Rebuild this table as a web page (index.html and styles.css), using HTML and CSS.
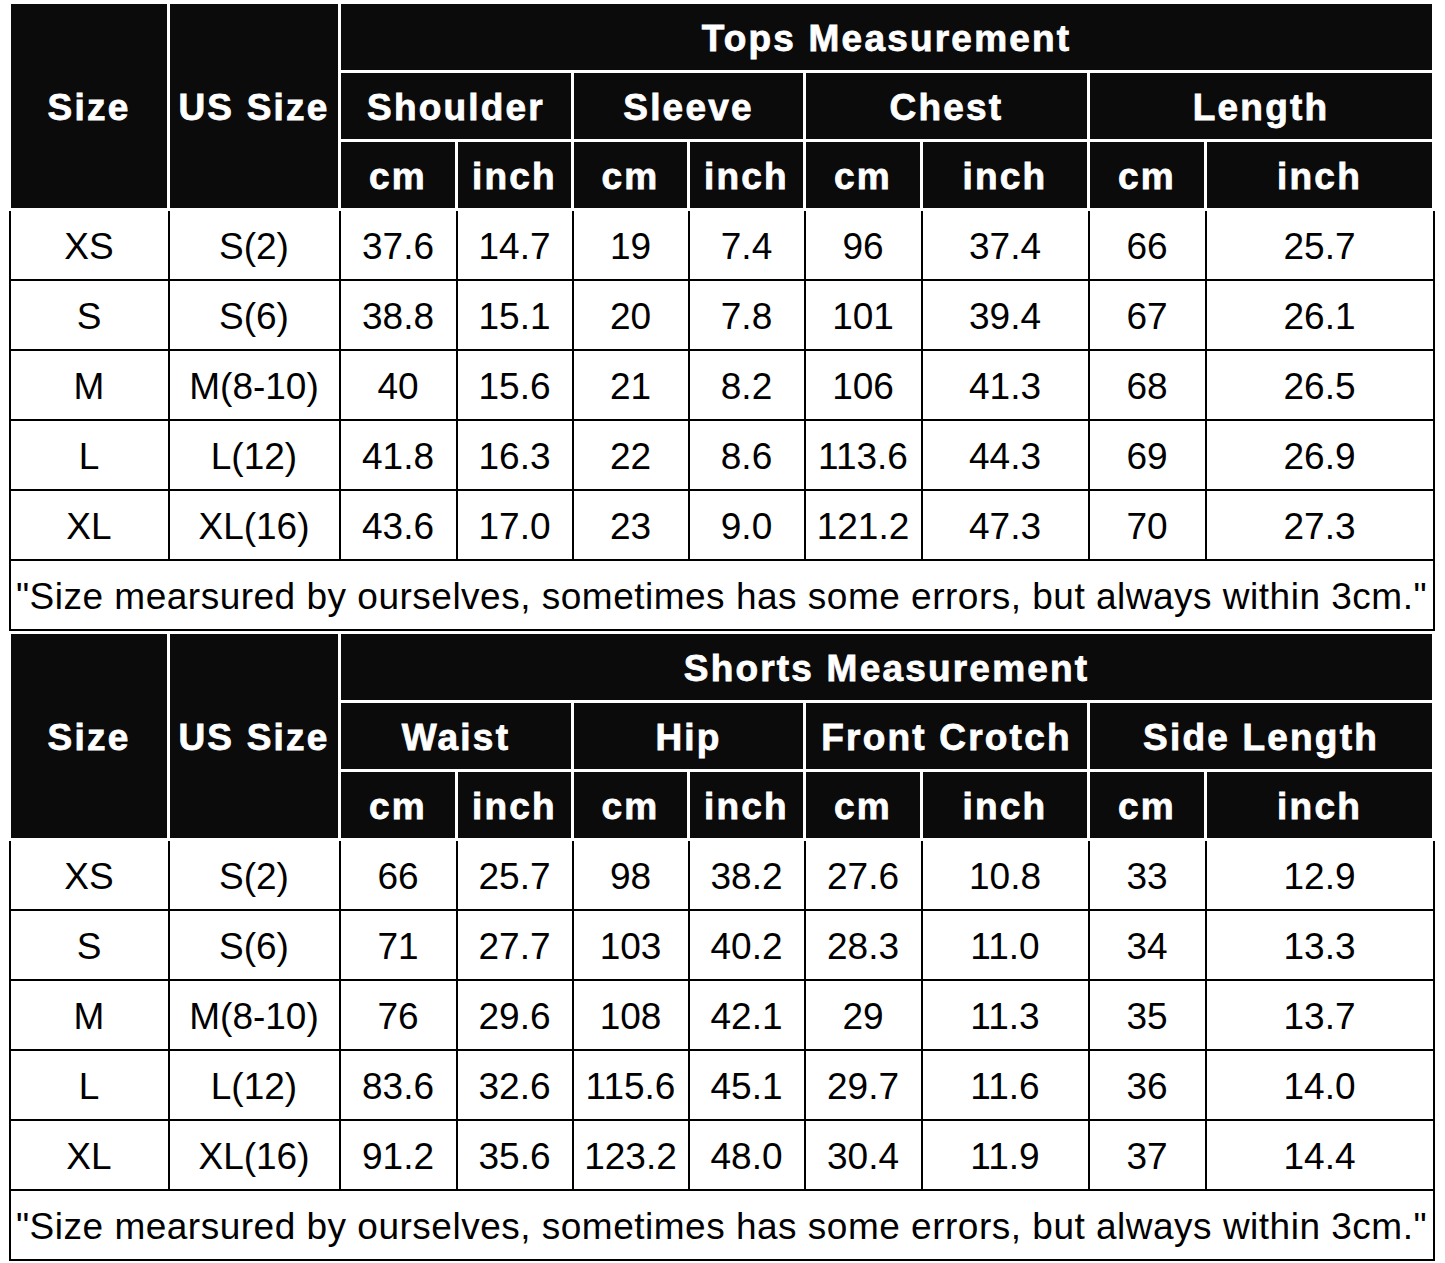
FILE: index.html
```html
<!DOCTYPE html>
<html>
<head>
<meta charset="utf-8">
<link rel="stylesheet" href="styles.css">
</head>
<body>
<div class="page">
<table class="chart">
  <colgroup>
    <col class="c1"><col class="c2"><col class="c3"><col class="c4"><col class="c5"><col class="c6"><col class="c7"><col class="c8"><col class="c9"><col class="c10">
  </colgroup>
  <thead>
    <tr class="hr"><th rowspan="3">Size</th><th rowspan="3">US Size</th><th colspan="8">Tops Measurement</th></tr>
    <tr class="hr"><th colspan="2">Shoulder</th><th colspan="2">Sleeve</th><th colspan="2">Chest</th><th colspan="2">Length</th></tr>
    <tr class="hr"><th>cm</th><th>inch</th><th>cm</th><th>inch</th><th>cm</th><th>inch</th><th>cm</th><th>inch</th></tr>
  </thead>
  <tbody>
    <tr><td>XS</td><td>S(2)</td><td>37.6</td><td>14.7</td><td>19</td><td>7.4</td><td>96</td><td>37.4</td><td>66</td><td>25.7</td></tr>
    <tr><td>S</td><td>S(6)</td><td>38.8</td><td>15.1</td><td>20</td><td>7.8</td><td>101</td><td>39.4</td><td>67</td><td>26.1</td></tr>
    <tr><td>M</td><td>M(8-10)</td><td>40</td><td>15.6</td><td>21</td><td>8.2</td><td>106</td><td>41.3</td><td>68</td><td>26.5</td></tr>
    <tr><td>L</td><td>L(12)</td><td>41.8</td><td>16.3</td><td>22</td><td>8.6</td><td>113.6</td><td>44.3</td><td>69</td><td>26.9</td></tr>
    <tr><td>XL</td><td>XL(16)</td><td>43.6</td><td>17.0</td><td>23</td><td>9.0</td><td>121.2</td><td>47.3</td><td>70</td><td>27.3</td></tr>
    <tr><td class="note" colspan="10">"Size mearsured by ourselves, sometimes has some errors, but always within 3cm."</td></tr>
  </tbody>
</table>
<table class="chart">
  <colgroup>
    <col class="c1"><col class="c2"><col class="c3"><col class="c4"><col class="c5"><col class="c6"><col class="c7"><col class="c8"><col class="c9"><col class="c10">
  </colgroup>
  <thead>
    <tr class="hr"><th rowspan="3">Size</th><th rowspan="3">US Size</th><th colspan="8">Shorts Measurement</th></tr>
    <tr class="hr"><th colspan="2">Waist</th><th colspan="2">Hip</th><th colspan="2">Front Crotch</th><th colspan="2">Side Length</th></tr>
    <tr class="hr"><th>cm</th><th>inch</th><th>cm</th><th>inch</th><th>cm</th><th>inch</th><th>cm</th><th>inch</th></tr>
  </thead>
  <tbody>
    <tr><td>XS</td><td>S(2)</td><td>66</td><td>25.7</td><td>98</td><td>38.2</td><td>27.6</td><td>10.8</td><td>33</td><td>12.9</td></tr>
    <tr><td>S</td><td>S(6)</td><td>71</td><td>27.7</td><td>103</td><td>40.2</td><td>28.3</td><td>11.0</td><td>34</td><td>13.3</td></tr>
    <tr><td>M</td><td>M(8-10)</td><td>76</td><td>29.6</td><td>108</td><td>42.1</td><td>29</td><td>11.3</td><td>35</td><td>13.7</td></tr>
    <tr><td>L</td><td>L(12)</td><td>83.6</td><td>32.6</td><td>115.6</td><td>45.1</td><td>29.7</td><td>11.6</td><td>36</td><td>14.0</td></tr>
    <tr><td>XL</td><td>XL(16)</td><td>91.2</td><td>35.6</td><td>123.2</td><td>48.0</td><td>30.4</td><td>11.9</td><td>37</td><td>14.4</td></tr>
    <tr><td class="note" colspan="10">"Size mearsured by ourselves, sometimes has some errors, but always within 3cm."</td></tr>
  </tbody>
</table>
</div>
</body>
</html>
```

FILE: styles.css
```css
html, body {
  margin: 0;
  padding: 0;
  background: #fff;
}
.page {
  padding: 1px 0 0 8px;
}
.chart {
  border-collapse: collapse;
  table-layout: fixed;
  width: 1424px;
  font-family: "Liberation Sans", Arial, sans-serif;
  color: #000;
}
.c1 { width: 159px; }
.c2 { width: 171px; }
.c3 { width: 117px; }
.c4 { width: 116px; }
.c5 { width: 116px; }
.c6 { width: 116px; }
.c7 { width: 117px; }
.c8 { width: 167px; }
.c9 { width: 117px; }
.c10 { width: 228px; }
.hr { height: 69px; }
th {
  background: #0b0b0b;
  color: #fff;
  border: 3px solid #fff;
  font-weight: bold;
  font-size: 37px;
  letter-spacing: 2.2px;
  -webkit-text-stroke: 0.8px #fff;
  padding: 3px 0 0;
  text-align: center;
  vertical-align: middle;
  white-space: nowrap;
  overflow: hidden;
}
td {
  border: 2px solid #000;
  height: 65px;
  padding: 3px 0 0;
  font-size: 37px;
  text-align: center;
  vertical-align: middle;
  white-space: nowrap;
  overflow: hidden;
}
td.note {
  text-align: center;
  letter-spacing: 0.5px;
}
```
